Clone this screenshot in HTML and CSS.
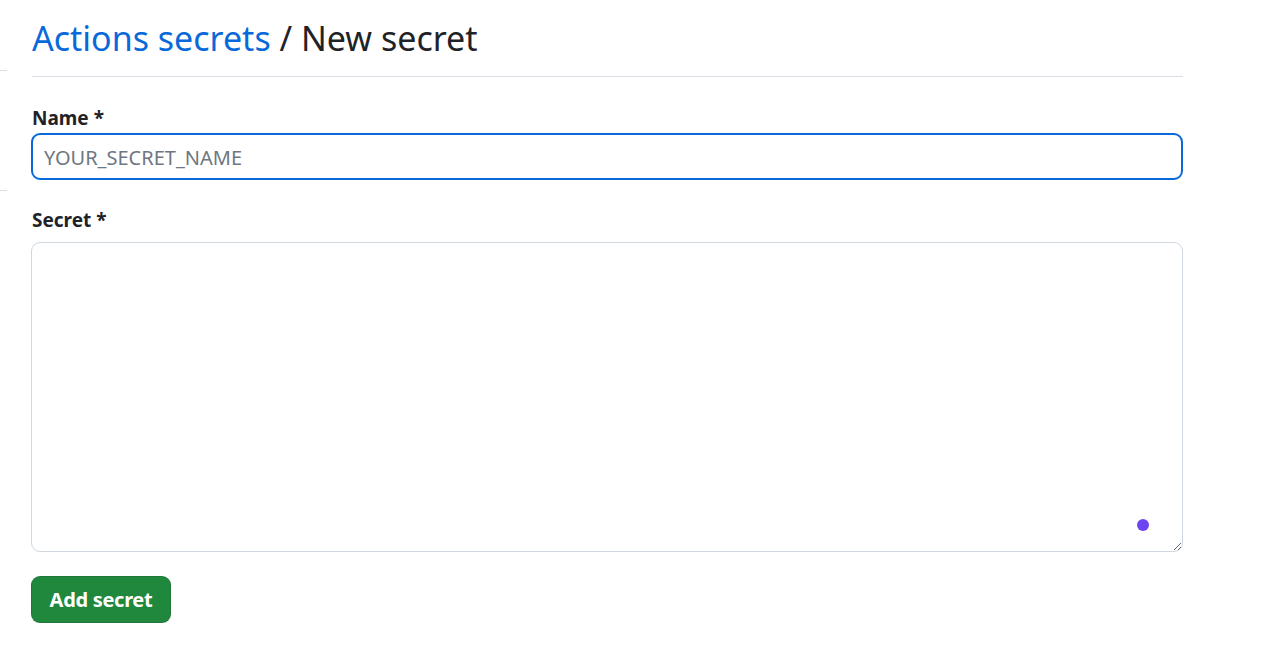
FILE: index.html
```html
<!DOCTYPE html>
<html lang="en">
<head>
<meta charset="utf-8">
<title>New secret</title>
<link rel="stylesheet" href="styles.css">
</head>
<body>
<div class="layout">
  <aside class="sidebar">
    <div class="side-item side-first"></div>
    <div class="side-item"></div>
  </aside>
  <main class="main">
    <div class="subhead">
      <h2 class="subhead-heading"><a class="crumb" href="#">Actions secrets</a> / New secret</h2>
    </div>
    <form class="form">
      <div class="field field-name">
        <label class="label" for="secret_name">Name *</label>
        <input class="input" id="secret_name" type="text" placeholder="YOUR_SECRET_NAME" autofocus>
      </div>
      <div class="field field-secret">
        <label class="label" for="secret_value">Secret *</label>
        <div class="textarea-wrap">
          <textarea class="textarea" id="secret_value"></textarea>
          <span class="ext-dot"></span>
        </div>
      </div>
      <button class="btn-primary" type="button">Add secret</button>
    </form>
  </main>
</div>
</body>
</html>
```

FILE: styles.css
```css
* { box-sizing: border-box; }
html, body { margin: 0; padding: 0; background: #ffffff; }
body {
  font-family: "Noto Sans", "Liberation Sans", sans-serif;
  color: #1f2328;
}
.layout {
  display: flex;
  gap: 24px;
  width: 1270px;
}
.sidebar {
  width: 7px;
  flex: none;
}
.side-item {
  height: 120px;
  border-top: 1px solid #d8dee4;
}
.side-first { margin-top: 70px; }
.main {
  width: 1152px;
  flex: none;
}
.subhead {
  padding-top: 11px;
  padding-bottom: 11px;
  margin-left: 1px;
  border-bottom: 1px solid #d8dee4;
}
.subhead-heading {
  margin: 0;
  font-size: 34px;
  line-height: 54px;
  font-weight: 400;
  color: #1f2328;
}
.crumb {
  color: #0969da;
  text-decoration: none;
}
.form { display: flex; flex-direction: column; align-items: flex-start; }
.field { width: 100%; }
.field-name { margin-top: 26px; }
.field-secret { margin-top: 25px; }
.label {
  display: block;
  margin-left: 1px;
  font-size: 19px;
  line-height: 30px;
  font-weight: 700;
  color: #1f2328;
}
.field-secret .label { margin-bottom: 7px; }
.input {
  display: block;
  width: 100%;
  height: 47px;
  padding: 2px 11px 0;
  border: 2px solid #0969da;
  border-radius: 9px;
  font-family: inherit;
  font-size: 20px;
  color: #1f2328;
  outline: none;
  background: #ffffff;
}
.input::placeholder { color: #6e7781; }
.textarea-wrap { position: relative; width: 100%; }
.textarea {
  display: block;
  width: 100%;
  height: 310px;
  padding: 11px 12px;
  border: 1px solid #d0d7de;
  border-radius: 9px;
  font-family: inherit;
  font-size: 20px;
  resize: vertical;
  outline: none;
  background: #ffffff;
}
.ext-dot {
  position: absolute;
  right: 34px;
  bottom: 21px;
  width: 12px;
  height: 12px;
  border-radius: 50%;
  background: #6d45f0;
}
.btn-primary {
  margin-top: 24px;
  width: 140px;
  height: 47px;
  padding: 0;
  border: 1px solid rgba(31, 35, 40, 0.15);
  border-radius: 9px;
  background: #1f883d;
  color: #ffffff;
  font-family: inherit;
  font-size: 20px;
  font-weight: 700;
  letter-spacing: -0.3px;
  box-shadow: 0 1px 0 rgba(31, 35, 40, 0.1);
  cursor: pointer;
}
```
